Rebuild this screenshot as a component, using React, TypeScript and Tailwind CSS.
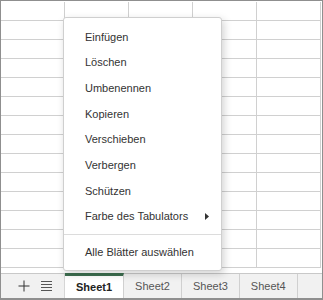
import React from "react";

const menuItems = [
  "Einfügen",
  "Löschen",
  "Umbenennen",
  "Kopieren",
  "Verschieben",
  "Verbergen",
  "Schützen",
];

const sheets = ["Sheet1", "Sheet2", "Sheet3", "Sheet4"];

const App = () => {
  const rows = Array.from({ length: 14 });
  const cols = Array.from({ length: 5 });

  return (
    <div
      className="relative flex flex-col w-[323px] h-[300px] border border-[#8f8f8f] border-b-2 bg-white overflow-hidden"
      style={{ fontFamily: '"Liberation Sans", Arial, sans-serif' }}
    >
      {/* cell grid */}
      <div className="flex-1 overflow-hidden pt-px">
        {rows.map((_, r) => (
          <div key={r} className="flex">
            {cols.map((_, c) => (
              <div
                key={c}
                className="w-[64px] h-[19px] shrink-0 border-r border-b border-[#d0d0d0]"
              />
            ))}
          </div>
        ))}
      </div>

      {/* sheet tabs */}
      <div className="flex h-[25px] shrink-0 border-t border-[#c8c8c8] bg-[#f1f1f1] text-[11px]">
        <div className="flex items-center w-[64px] shrink-0 border-r border-[#d6d6d6]">
          <svg width="12" height="12" viewBox="0 0 12 12" className="ml-[17px]">
            <path d="M6 0.5V11.5M0.5 6H11.5" stroke="#333" strokeWidth="1" />
          </svg>
          <svg width="11" height="10" viewBox="0 0 11 10" className="ml-[11px]">
            <path
              d="M0 0.5H11M0 3.5H11M0 6.5H11M0 9.5H11"
              stroke="#555"
              strokeWidth="1"
            />
          </svg>
        </div>
        {sheets.map((name, i) => (
          <div
            key={name}
            className={
              i === 0
                ? "flex items-center px-[11px] bg-white border-t-[3px] border-t-[#3c6e4f] border-r border-r-[#d0d0d0] font-bold text-[#222] -mt-px"
                : "flex items-center px-[11px] border-r border-[#d0d0d0] text-[#555]"
            }
          >
            {name}
          </div>
        ))}
      </div>

      {/* context menu */}
      <div className="absolute left-[62px] top-[16px] w-[159px] bg-white border border-[#cfcfcf] rounded-[3px] shadow-[2px_3px_8px_rgba(0,0,0,0.18)] pt-[6px] pb-[5px] text-[11px] text-[#333]">
        {menuItems.map((item) => (
          <div key={item} className="h-[25.7px] flex items-center pl-[21px]">
            {item}
          </div>
        ))}
        <div className="h-[25.7px] flex items-center justify-between pl-[21px] pr-[12px]">
          <span>Farbe des Tabulators</span>
          <svg width="4" height="7" viewBox="0 0 4 7">
            <path d="M0 0L4 3.5L0 7Z" fill="#333" />
          </svg>
        </div>
        <div className="mt-[4px] mb-[5px] border-t border-[#dcdcdc]" />
        <div className="h-[25px] flex items-center pl-[21px]">
          Alle Blätter auswählen
        </div>
      </div>
    </div>
  );
};

export default App;
